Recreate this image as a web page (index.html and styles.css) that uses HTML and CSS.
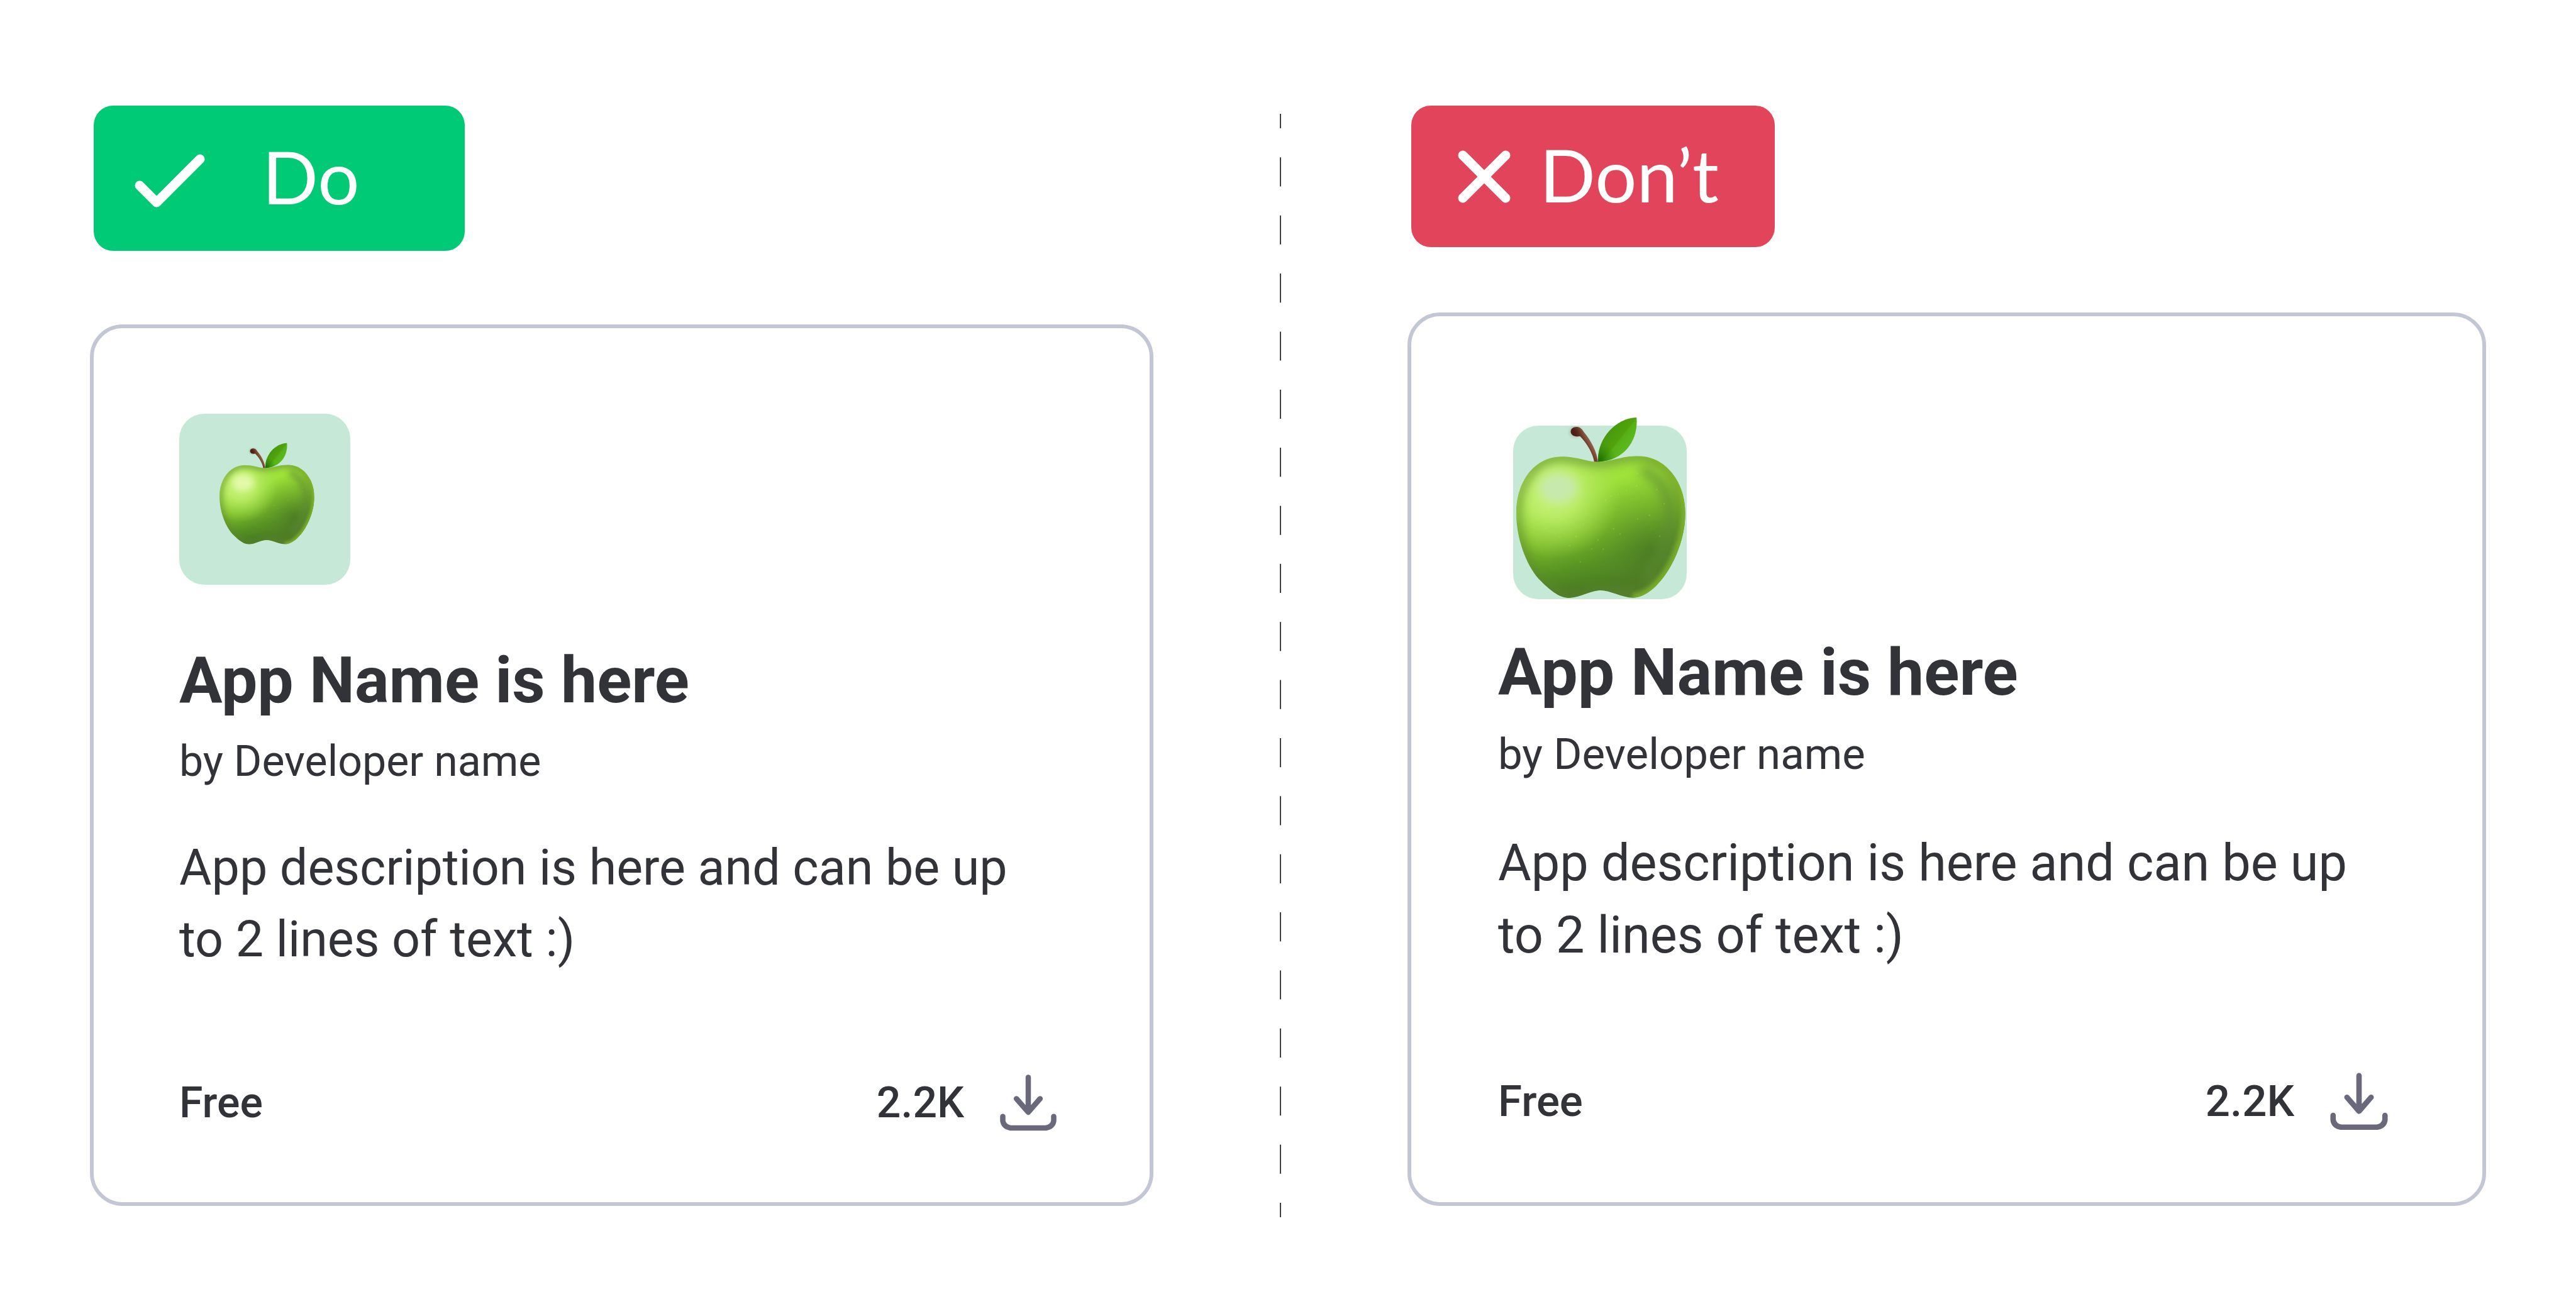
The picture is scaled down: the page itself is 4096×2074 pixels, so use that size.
FILE: index.html
```html
<!DOCTYPE html>
<html lang="en">
<head>
    <meta charset="UTF-8">
    <meta name="viewport" content="width=device-width, initial-scale=1.0">
    <title>App icon guidelines</title>
    <link rel="stylesheet" href="styles.css">
</head>
<body>
    <!-- Shared drawings -->
    <svg class="sprite" aria-hidden="true">
        <defs>
            <linearGradient id="skin" gradientUnits="userSpaceOnUse" x1="430" y1="264" x2="620" y2="980">
                <stop offset="0" stop-color="#a9e942"/>
                <stop offset="0.25" stop-color="#9be038"/>
                <stop offset="0.5" stop-color="#7cbc2a"/>
                <stop offset="0.72" stop-color="#579323"/>
                <stop offset="0.88" stop-color="#4a7b22"/>
                <stop offset="1" stop-color="#527525"/>
            </linearGradient>
            <radialGradient id="shade" gradientUnits="userSpaceOnUse" cx="780" cy="740" r="400">
                <stop offset="0" stop-color="#487524" stop-opacity="0.65"/>
                <stop offset="0.5" stop-color="#55892a" stop-opacity="0.3"/>
                <stop offset="1" stop-color="#5f9a1f" stop-opacity="0"/>
            </radialGradient>
            <radialGradient id="glow" gradientUnits="userSpaceOnUse" cx="290" cy="440" r="340">
                <stop offset="0" stop-color="#cdf486"/>
                <stop offset="0.4" stop-color="#bdee68" stop-opacity="0.9"/>
                <stop offset="1" stop-color="#a5dd4e" stop-opacity="0"/>
            </radialGradient>
            <linearGradient id="stem" gradientUnits="userSpaceOnUse" x1="430" y1="215" x2="475" y2="190">
                <stop offset="0" stop-color="#4f2117"/>
                <stop offset="0.5" stop-color="#6e3b2a"/>
                <stop offset="1" stop-color="#94634a"/>
            </linearGradient>
            <linearGradient id="leaf" gradientUnits="userSpaceOnUse" x1="560" y1="150" x2="660" y2="230">
                <stop offset="0" stop-color="#469a0c"/>
                <stop offset="0.5" stop-color="#52a30b"/>
                <stop offset="0.56" stop-color="#55b018"/>
                <stop offset="1" stop-color="#5dbb1c"/>
            </linearGradient>
            <radialGradient id="leafBase" gradientUnits="userSpaceOnUse" cx="518" cy="285" r="90">
                <stop offset="0" stop-color="#1c6b04"/>
                <stop offset="1" stop-color="#2c8508" stop-opacity="0"/>
            </radialGradient>
            <filter id="soft" x="-50%" y="-50%" width="200%" height="200%">
                <feGaussianBlur stdDeviation="26"/>
            </filter>
            <filter id="softer" x="-50%" y="-50%" width="200%" height="200%">
                <feGaussianBlur stdDeviation="12"/>
            </filter>
            <path id="body" d="M512 293 C580 293 630 264 715 264 C850 264 954 390 954 555 C954 690 885 845 805 920 C770 955 725 979 688 979 C635 979 575 942 525 942 C475 942 420 980 365 980 C310 980 255 925 215 885 C150 810 101 680 101 550 C101 385 200 267 330 267 C410 267 455 293 512 293Z"/>
            <clipPath id="bodyClip"><use href="#body"/></clipPath>
        </defs>

        <symbol id="apple" viewBox="95 60 866 926">
            <path fill="url(#stem)" d="M376 142 C375 126 389 116 408 117 C425 118 432 128 442 142 C478 185 508 240 514 296 L495 296 C489 250 452 193 422 164 C399 168 377 160 376 142Z"/>
            <ellipse cx="399" cy="142" rx="20" ry="17" fill="#441a12" opacity="0.6" filter="url(#softer)"/>
            <g clip-path="url(#bodyClip)">
                <use href="#body" fill="url(#skin)"/>
                <use href="#body" fill="url(#shade)"/>
                <use href="#body" fill="url(#glow)"/>
                <use href="#body" fill="none" stroke="#5a8530" stroke-width="50" opacity="0.65" filter="url(#soft)"/>
                <path d="M730 330 C850 380 880 480 875 590 C870 700 820 810 750 890" fill="none" stroke="#5f8a35" stroke-width="60" opacity="0.6" filter="url(#soft)"/>
                <path d="M790 275 C900 330 957 440 954 560 C950 700 880 850 800 925 C770 955 725 979 688 979" fill="none" stroke="#82b52c" stroke-width="42" opacity="0.85" filter="url(#softer)"/>
                <path d="M190 340 C115 420 95 510 103 590" fill="none" stroke="#a3cf4c" stroke-width="16" opacity="0.6" filter="url(#softer)"/>
                <ellipse cx="315" cy="425" rx="95" ry="75" fill="currentColor" filter="url(#soft)"/>
                <g fill="#c6ef7c" opacity="0.2">
                    <circle cx="713" cy="352" r="4"/><circle cx="657" cy="436" r="4"/><circle cx="708" cy="414" r="5"/>
                    <circle cx="810" cy="433" r="4"/><circle cx="576" cy="466" r="4"/><circle cx="551" cy="486" r="5"/>
                    <circle cx="615" cy="457" r="4"/><circle cx="848" cy="504" r="4"/><circle cx="773" cy="563" r="4"/>
                    <circle cx="713" cy="582" r="4"/><circle cx="592" cy="631" r="5"/><circle cx="625" cy="657" r="4"/>
                    <circle cx="514" cy="687" r="4"/><circle cx="353" cy="576" r="4"/><circle cx="386" cy="575" r="4"/>
                    <circle cx="251" cy="629" r="5"/><circle cx="320" cy="671" r="4"/><circle cx="403" cy="669" r="5"/>
                    <circle cx="440" cy="610" r="4"/><circle cx="370" cy="716" r="4"/><circle cx="481" cy="732" r="4"/>
                    <circle cx="540" cy="734" r="4"/><circle cx="424" cy="798" r="4"/><circle cx="825" cy="668" r="4"/>
                </g>
            </g>
            <path fill="url(#leaf)" d="M514 293 C506 180 600 72 708 69 C718 175 655 287 514 293Z"/>
            <path fill="url(#leafBase)" d="M514 293 C506 180 600 72 708 69 C718 175 655 287 514 293Z"/>
        </symbol>

        <symbol id="download" viewBox="-13 -13 121 121">
            <path d="M47.5 4.5V63M27.5 40.5L47.5 63.5L67.5 40.5M4.5 70.5V78Q6 88 17.5 90H77.5Q89 88 90.5 78V70.5" fill="none" stroke="#69697b" stroke-width="9" stroke-linecap="round" stroke-linejoin="round"/>
        </symbol>
    </svg>

    <main class="comparison">
        <section class="column do">
            <div class="badge">
                <svg class="badge-icon" viewBox="0 0 112 86" aria-hidden="true">
                    <path d="M8 50L35 77L104 8" fill="none" stroke="#fff" stroke-width="15" stroke-linecap="round" stroke-linejoin="round"/>
                </svg>
                <span>Do</span>
            </div>
            <article class="card">
                <div class="app-icon"><svg class="apple"><use href="#apple"/></svg></div>
                <h2 class="app-name">App Name is here</h2>
                <p class="developer">by Developer name</p>
                <p class="description">App description is here and can be up to 2 lines of text :)</p>
                <div class="card-footer">
                    <span class="price">Free</span>
                    <span class="downloads">2.2K</span>
                    <svg class="download-icon"><use href="#download"/></svg>
                </div>
            </article>
        </section>

        <svg class="divider" aria-hidden="true">
            <line x1="1" y1="0" x2="1" y2="100%" pathLength="38"/>
        </svg>

        <section class="column dont">
            <div class="badge">
                <svg class="badge-icon" viewBox="0 0 84 84" aria-hidden="true">
                    <path d="M8 8L76 76M76 8L8 76" fill="none" stroke="#fff" stroke-width="15" stroke-linecap="round"/>
                </svg>
                <span>Don’t</span>
            </div>
            <article class="card">
                <div class="app-icon"><svg class="apple"><use href="#apple"/></svg></div>
                <h2 class="app-name">App Name is here</h2>
                <p class="developer">by Developer name</p>
                <p class="description">App description is here and can be up to 2 lines of text :)</p>
                <div class="card-footer">
                    <span class="price">Free</span>
                    <span class="downloads">2.2K</span>
                    <svg class="download-icon"><use href="#download"/></svg>
                </div>
            </article>
        </section>
    </main>
</body>
</html>
```
FILE: styles.css
```css
* {
    box-sizing: border-box;
}
body {
    margin: 0;
    background-color: #fff;
    color: #323338;
    font-family: Roboto, "Liberation Sans", sans-serif;
}
.sprite {
    position: absolute;
    width: 0;
    height: 0;
}
.comparison {
    display: grid;
    grid-template-columns: 1691fr 2px 1715fr;
    column-gap: 201px;
    padding: 168px 143px 120px;
}
.column {
    padding-bottom: 18px;
}
.divider {
    width: 2px;
    height: calc(100% - 13px);
    margin-top: 13px;
}
.divider line {
    stroke: #404040;
    stroke-width: 2;
    stroke-dasharray: 1 1;
    stroke-dashoffset: 0.5;
}

/* Do / Don't labels */
.badge {
    display: flex;
    align-items: center;
    width: fit-content;
    margin-left: 6px;
    border-radius: 31px;
    color: #fff;
    font-family: Lato, "Open Sans", sans-serif;
    font-size: 117px;
}
.badge-icon {
    flex: none;
}
.badge span {
    padding-bottom: 8px;
    line-height: 140px;
}
.do .badge {
    min-width: 590px;
    height: 231px;
    margin-bottom: 117px;
    padding: 0 65px;
    gap: 91px;
    background-color: #00ca75;
}
.do .badge-icon {
    width: 112px;
    height: 86px;
    margin-top: 8px;
}
.dont .badge {
    min-width: 578px;
    height: 225px;
    margin-bottom: 104px;
    padding: 0 74px;
    gap: 46px;
    background-color: #e2445c;
}
.dont .badge-icon {
    width: 84px;
    height: 84px;
}

/* App cards */
.card {
    border: 6px solid #c3c6d4;
    border-radius: 52px;
    padding: 136px 136px 101px;
}
.app-icon {
    position: relative;
    width: 272px;
    height: 272px;
    margin-bottom: 92px;
    border-radius: 40px;
    background-color: #c5e9d6;
}
.apple {
    position: absolute;
    top: 45px;
    left: 63px;
    width: 153px;
    height: 164px;
    color: #e2f9a6;
}
.app-name {
    margin: 0 0 29px;
    font-size: 102px;
    font-weight: 700;
    line-height: 120px;
}
.developer {
    margin: 0 0 72px;
    font-size: 68px;
    line-height: 80px;
}
.description {
    margin: 0 0 146px;
    padding-right: 60px;
    font-size: 79px;
    line-height: 114px;
}
.card-footer {
    display: flex;
    align-items: center;
    font-size: 68px;
    font-weight: 500;
    line-height: 80px;
}
.downloads {
    margin-left: auto;
    margin-right: 45px;
}
.download-icon {
    width: 114px;
    height: 114px;
}

/* The right card is drawn slightly larger */
.dont .card {
    padding: 138px 138px 102px;
}
.dont .app-icon {
    width: 276px;
    height: 276px;
    margin: 36px 0 56px 24px;
}
.dont .apple {
    top: -16px;
    left: 3px;
    width: 273px;
    height: 292px;
    color: #c7e9ae;
}
.dont .app-name {
    margin-bottom: 28px;
    font-size: 104px;
    line-height: 122px;
}
.dont .developer {
    margin-bottom: 75px;
    font-size: 69px;
    line-height: 81px;
}
.dont .description {
    margin-bottom: 149px;
    font-size: 81px;
    line-height: 115px;
}
.dont .card-footer {
    font-size: 69px;
}
.dont .download-icon {
    width: 116px;
    height: 116px;
}
```
